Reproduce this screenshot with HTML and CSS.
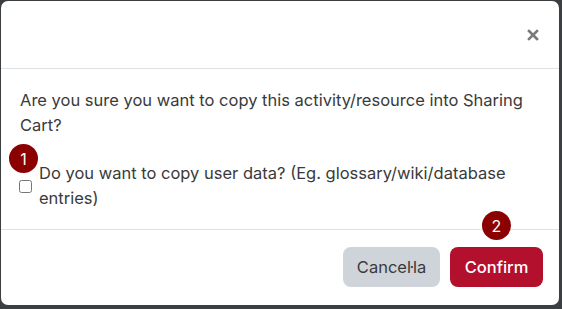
FILE: index.html
```html
<!DOCTYPE html>
<html lang="ca">
<head>
    <meta charset="UTF-8">
    <meta name="viewport" content="width=device-width, initial-scale=1.0">
    <title>Sharing Cart</title>
    <link rel="stylesheet" href="styles.css">
</head>
<body>
    <div class="modal">
        <div class="modal-header">
            <button class="close" aria-label="Close">
                <svg width="12" height="12" viewBox="0 0 12 12">
                    <path d="M2 2 L10 10 M10 2 L2 10" stroke="#7a7a7a" stroke-width="2.6" stroke-linecap="square"/>
                </svg>
            </button>
        </div>

        <div class="modal-body">
            <p>Are you sure you want to copy this activity/resource into Sharing Cart?</p>

            <div class="form-check">
                <span class="step step-one">1</span>
                <input type="checkbox" id="userdata">
                <label for="userdata">Do you want to copy user data? (Eg. glossary/wiki/database entries)</label>
            </div>
        </div>

        <div class="modal-footer">
            <span class="step step-two">2</span>
            <button class="btn btn-secondary">Cancel·la</button>
            <button class="btn btn-primary">Confirm</button>
        </div>
    </div>
</body>
</html>
```

FILE: styles.css
```css
* {
    margin: 0;
    padding: 0;
    box-sizing: border-box;
}

body {
    font-family: Inter, "Liberation Sans", sans-serif;
    background: #3c3f42;
    width: 562px;
    height: 309px;
    padding: 1px 3px 4px 1px;
    color: #3a3a3a;
}

.modal {
    position: relative;
    background: white;
    border-radius: 7px;
    height: 100%;
    display: flex;
    flex-direction: column;
}

.modal-header {
    height: 68px;
    flex-shrink: 0;
    border-bottom: 1px solid #dee2e6;
    display: flex;
    align-items: center;
    justify-content: flex-end;
    padding-right: 20px;
}

.close {
    background: none;
    border: none;
    display: flex;
    cursor: pointer;
}

.modal-body {
    height: 161px;
    flex-shrink: 0;
    padding: 19px 24px 0 19px;
    font-size: 16.5px;
    line-height: 25px;
    border-bottom: 1px solid #dee2e6;
}

.modal-body p {
    margin-bottom: 23px;
}

.form-check {
    position: relative;
    display: flex;
    align-items: center;
}

.form-check input {
    width: 13px;
    height: 13px;
    margin: 0 7px 0 -1px;
    flex-shrink: 0;
}

.modal-footer {
    position: relative;
    flex: 1;
    display: flex;
    justify-content: flex-end;
    align-items: center;
    gap: 10px;
    padding: 0 16px 2px 0;
}

.btn {
    height: 40px;
    border: none;
    border-radius: 8px;
    font-family: inherit;
    font-size: 16.5px;
    cursor: pointer;
}

.btn-secondary {
    width: 97px;
    background: #ced4da;
    color: #3a3a3a;
}

.btn-primary {
    width: 93px;
    background: #b3102d;
    color: white;
    font-weight: 500;
}

.step {
    position: absolute;
    width: 29px;
    height: 29px;
    border-radius: 50%;
    background: #8b0000;
    color: white;
    font-size: 16px;
    display: flex;
    align-items: center;
    justify-content: center;
    line-height: 1;
}

.step-one {
    left: -11px;
    top: -17px;
}

.step-two {
    right: 48px;
    top: -19px;
}
```
